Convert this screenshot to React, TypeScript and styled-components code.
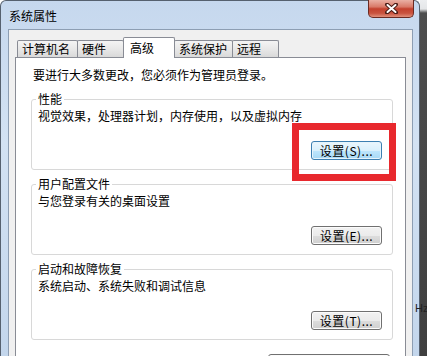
import React from "react"
import styled, { createGlobalStyle } from "styled-components"

const GlobalStyle = createGlobalStyle`
  html, body {
    margin: 0;
    padding: 0;
  }
  body {
    font-family: "Noto Sans CJK SC", "Noto Sans", sans-serif;
    font-size: 12px;
    color: #000;
  }
`

const Screen = styled.div`
  position: relative;
  display: flex;
  width: 427px;
  height: 356px;
  overflow: hidden;
  background: #fff;
`

const Desktop = styled.div`
  flex: 1;
  background: linear-gradient(#eceef0 0, #e4e6e8 9px, #4d4d4d 13px, #3f3f3f 100%);
`

const Window = styled.div`
  width: 420px;
  flex-shrink: 0;
  box-sizing: border-box;
  display: flex;
  flex-direction: column;
  padding: 0 6px 0 7px;
  border: 1px solid #56616f;
  border-bottom: none;
  border-radius: 6px 6px 0 0;
  background: linear-gradient(180deg, #c6d8ee 0%, #d3e2f3 40%, #c3d6ec 100%);
`

const TitleBar = styled.div`
  flex-shrink: 0;
  display: flex;
  justify-content: space-between;
  align-items: flex-start;
  height: 28px;
`

const Title = styled.span`
  margin: 8px 0 0 1px;
  line-height: 14px;
  color: #000;
`

const CloseButton = styled.div`
  display: flex;
  align-items: center;
  justify-content: center;
  width: 46px;
  height: 18px;
  margin: -1px -1px 0 0;
  box-sizing: border-box;
  border: 1px solid #6b2a22;
  border-top: none;
  border-radius: 0 0 5px 5px;
  background: linear-gradient(180deg, #eab0a4 0%, #d97a69 40%, #c3412e 52%, #c9533f 78%, #e1907c 100%);
`

const Client = styled.div`
  flex: 1;
  min-height: 0;
  display: flex;
  flex-direction: column;
  padding: 7px 6px 0 6px;
  border: 1px solid #8d9eb3;
  border-bottom: none;
  background: #f0f0f0;
`

const TabRow = styled.div`
  flex-shrink: 0;
  display: flex;
  align-items: flex-end;
  height: 20px;
  padding-left: 2px;
`

const Tab = styled.div<{ $active?: boolean; $w: number }>`
  position: relative;
  z-index: ${({ $active }) => ($active ? 2 : 1)};
  flex-shrink: 0;
  box-sizing: border-box;
  width: ${({ $w }) => $w}px;
  height: ${({ $active }) => ($active ? 21 : 17)}px;
  margin-left: -1px;
  margin-bottom: ${({ $active }) => ($active ? -1 : 0)}px;
  padding: ${({ $active }) => ($active ? "3px 0 0 6px" : "1px 0 0 4px")};
  border: 1px solid #898c95;
  border-bottom: none;
  border-radius: 2px 2px 0 0;
  line-height: 14px;
  white-space: nowrap;
  background: ${({ $active }) =>
    $active ? "#fff" : "linear-gradient(180deg, #f4f4f4 0%, #e8e8e8 50%, #d9d9d9 100%)"};

  &:first-child {
    margin-left: 0;
  }
`

const Panel = styled.div`
  position: relative;
  flex: 1 0 auto;
  display: flex;
  flex-direction: column;
  gap: 7px;
  padding: 10px 12px 0 15px;
  border: 1px solid #898c95;
  border-bottom: none;
  background: #fff;

  & > * {
    flex-shrink: 0;
  }
`

const Intro = styled.div`
  padding-left: 2px;
  margin-bottom: 3px;
  line-height: 14px;
`

const Group = styled.fieldset`
  margin: 0;
  padding: 0 10px 9px 4px;
  border: 1px solid #d8d8d8;
  border-radius: 3px;
  box-shadow: inset 1px 1px 0 #fff;
`

const Legend = styled.legend`
  padding: 0 2px;
  line-height: 14px;
`

const Desc = styled.div`
  margin: 3px 0 0 2px;
  line-height: 14px;
`

const ButtonRow = styled.div<{ $gap: number }>`
  display: flex;
  justify-content: flex-end;
  margin-top: ${({ $gap }) => $gap}px;
`

const Button = styled.div<{ $focus?: boolean; $w: number }>`
  box-sizing: border-box;
  width: ${({ $w }) => $w}px;
  height: 19px;
  display: flex;
  align-items: center;
  justify-content: center;
  border: 1px solid ${({ $focus }) => ($focus ? "#3c7fb1" : "#707070")};
  border-radius: 3px;
  line-height: 14px;
  letter-spacing: 0.5px;
  box-shadow: inset 0 0 0 1px ${({ $focus }) => ($focus ? "#e6f4fc" : "#fbfbfb")};
  background: ${({ $focus }) =>
    $focus
      ? "linear-gradient(180deg, #eaf6fd 0%, #d9f0fc 50%, #bee6fd 51%, #a7d9f5 100%)"
      : "linear-gradient(180deg, #f2f2f2 0%, #ebebeb 50%, #dddddd 51%, #cfcfcf 100%)"};
`

const Highlight = styled.div`
  position: absolute;
  left: 276px;
  top: 65px;
  width: 104px;
  height: 58px;
  box-sizing: border-box;
  border: 7px solid #e8282d;
  pointer-events: none;
`

const StrayText = styled.span`
  position: absolute;
  left: 415px;
  top: 302px;
  font-family: "Liberation Sans", sans-serif;
  font-size: 11px;
  color: #222;
`

const tabs = [
  { label: "计算机名", w: 61 },
  { label: "硬件", w: 47 },
  { label: "高级", w: 52, active: true },
  { label: "系统保护", w: 59 },
  { label: "远程", w: 47 },
]

const groups = [
  { title: "性能", desc: "视觉效果，处理器计划，内存使用，以及虚拟内存", btn: "设置(S)...", focus: true },
  { title: "用户配置文件", desc: "与您登录有关的桌面设置", btn: "设置(E)..." },
  { title: "启动和故障恢复", desc: "系统启动、系统失败和调试信息", btn: "设置(T)..." },
]

function CloseGlyph() {
  return (
    <svg width="13" height="11" viewBox="0 0 13 11">
      <path d="M2 1.5 L11 9.5 M11 1.5 L2 9.5" stroke="#4a1c16" strokeWidth="4" strokeLinecap="round" />
      <path d="M2.5 2 L10.5 9 M10.5 2 L2.5 9" stroke="#fff" strokeWidth="2" strokeLinecap="round" />
    </svg>
  )
}

export default function App() {
  return (
    <>
      <GlobalStyle />
      <Screen>
        <Window>
          <TitleBar>
            <Title>系统属性</Title>
            <CloseButton>
              <CloseGlyph />
            </CloseButton>
          </TitleBar>
          <Client>
            <TabRow>
              {tabs.map((t) => (
                <Tab key={t.label} $w={t.w} $active={t.active}>
                  {t.label}
                </Tab>
              ))}
            </TabRow>
            <Panel>
              <Intro>要进行大多数更改，您必须作为管理员登录。</Intro>
              {groups.map((g) => (
                <Group key={g.title}>
                  <Legend>{g.title}</Legend>
                  <Desc>{g.desc}</Desc>
                  <ButtonRow $gap={18}>
                    <Button $w={71} $focus={g.focus}>
                      {g.btn}
                    </Button>
                  </ButtonRow>
                </Group>
              ))}
              <ButtonRow $gap={7} style={{ marginRight: 3 }}>
                <Button $w={122}>环境变量(N)...</Button>
              </ButtonRow>
              <Highlight />
            </Panel>
          </Client>
        </Window>
        <Desktop />
        <StrayText>Hz</StrayText>
      </Screen>
    </>
  )
}
